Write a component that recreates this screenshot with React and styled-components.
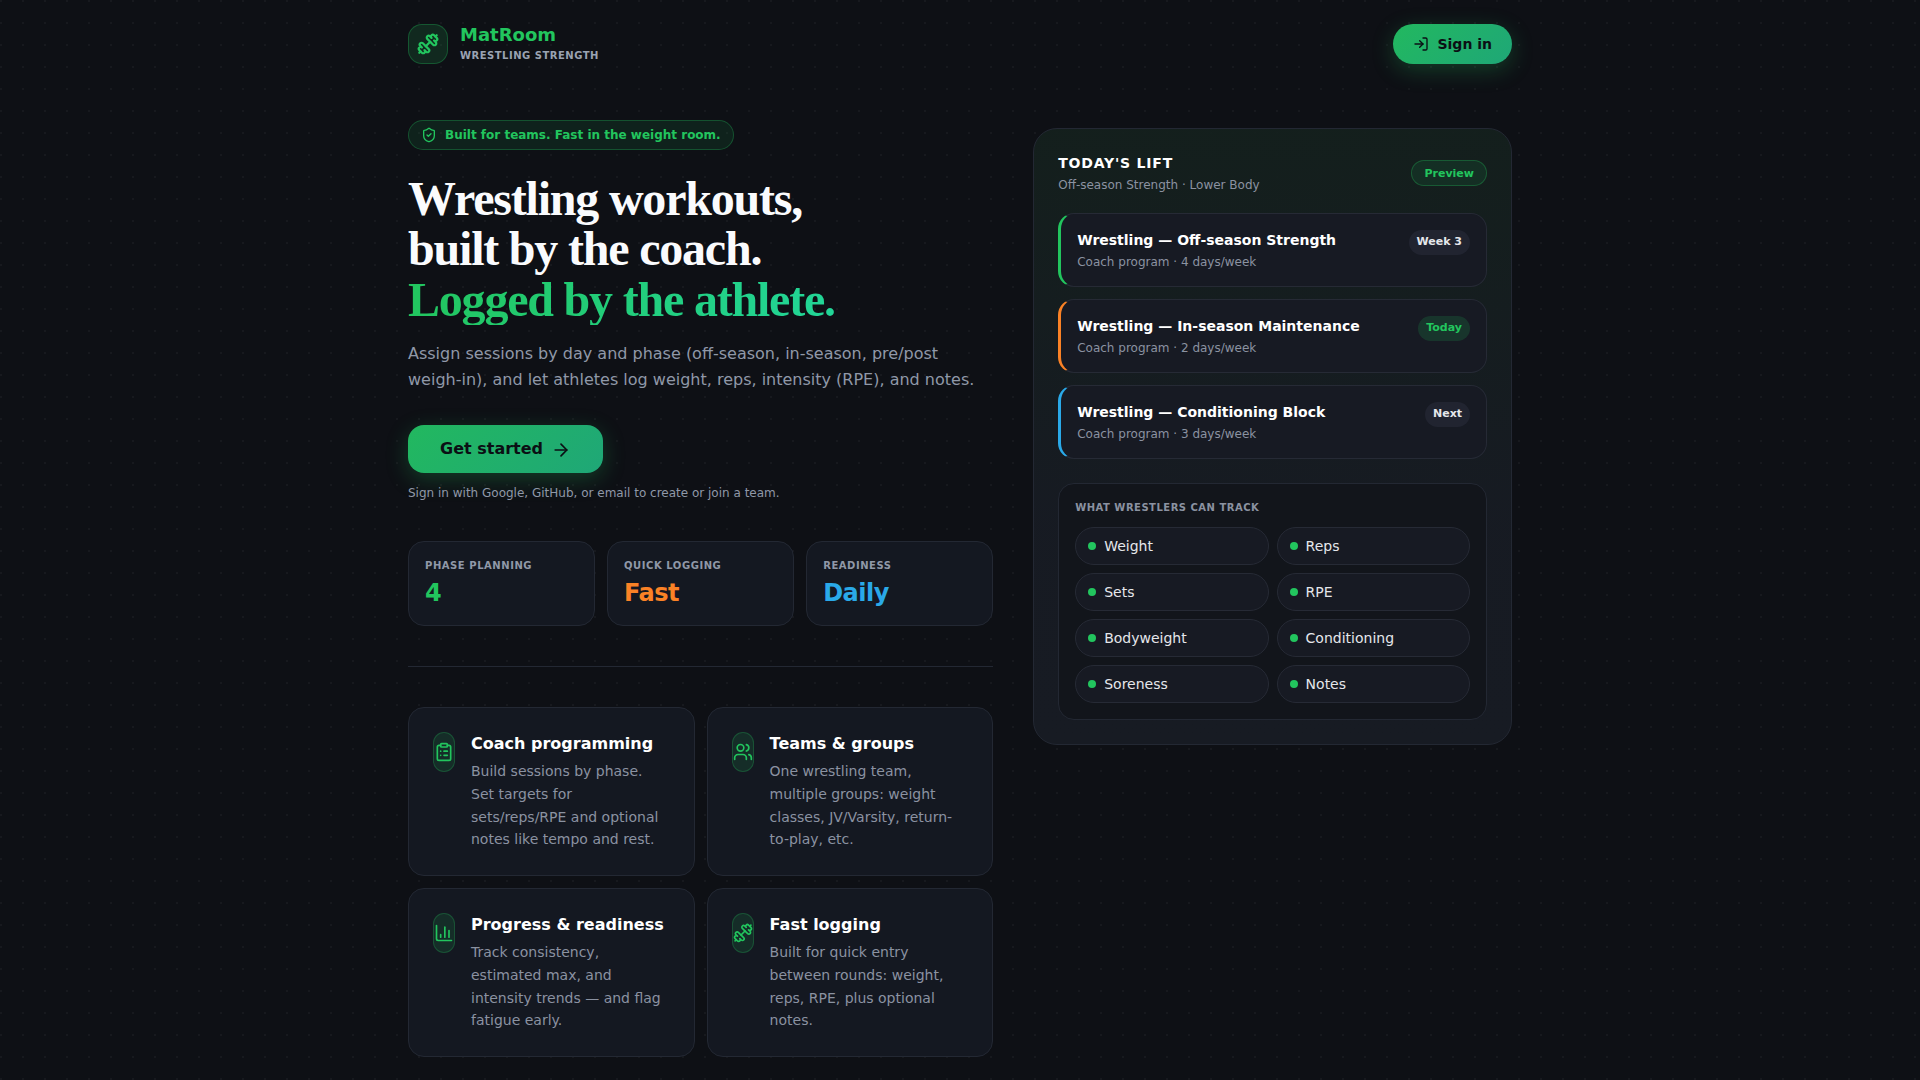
import React from 'react';
import styled, { createGlobalStyle } from 'styled-components';
import {
  ArrowRight,
  ChartColumn,
  ClipboardList,
  Dumbbell,
  LogIn,
  ShieldCheck,
  Users,
} from 'lucide-react';

const GlobalStyle = createGlobalStyle`
  * {
    box-sizing: border-box;
  }

  html, body {
    margin: 0;
    padding: 0;
    background-color: #0e1015;
  }

  body {
    min-height: 100vh;
    font-family: "DejaVu Sans", sans-serif;
    color: #e5e7eb;
    background-image: radial-gradient(circle at 1px 1px, rgba(255, 255, 255, 0.04) 1px, transparent 0);
    background-size: 22px 22px;
  }
`;

const Page = styled.div`
  width: 1152px;
  margin: 0 auto;
  padding: 0 24px 24px;
`;

const Header = styled.header`
  height: 88px;
  display: flex;
  align-items: center;
  justify-content: space-between;
`;

const Brand = styled.div`
  display: flex;
  align-items: center;
  gap: 12px;
`;

const LogoMark = styled.div`
  width: 40px;
  height: 40px;
  border-radius: 14px;
  display: flex;
  align-items: center;
  justify-content: center;
  color: #22c55e;
  background: rgba(34, 197, 94, 0.14);
  border: 1px solid rgba(34, 197, 94, 0.3);
`;

const BrandName = styled.div`
  font-size: 18px;
  line-height: 20px;
  font-weight: 700;
  color: #22c55e;
`;

const BrandTag = styled.div`
  margin-top: 4px;
  font-size: 10px;
  line-height: 14px;
  font-weight: 700;
  letter-spacing: 0.5px;
  color: #9aa3b2;
`;

const SignIn = styled.button`
  height: 40px;
  padding: 0 20px;
  border: none;
  border-radius: 20px;
  display: flex;
  align-items: center;
  gap: 8px;
  font: 700 14px "DejaVu Sans", sans-serif;
  color: #0b0f14;
  background: linear-gradient(135deg, #22b85f, #1fa777);
  box-shadow: 0 6px 22px rgba(34, 197, 94, 0.25);
`;

const Main = styled.main`
  display: grid;
  grid-template-columns: 1.1fr 0.9fr;
  gap: 40px;
  align-items: start;
  padding-top: 32px;
`;

const Column = styled.section`
  display: flex;
  flex-direction: column;
  align-items: stretch;
`;

const Pill = styled.div`
  align-self: flex-start;
  height: 30px;
  padding: 0 12px;
  border-radius: 15px;
  display: flex;
  align-items: center;
  gap: 8px;
  font-size: 12px;
  font-weight: 700;
  color: #22c55e;
  background: rgba(34, 197, 94, 0.1);
  border: 1px solid rgba(34, 197, 94, 0.3);
`;

const Headline = styled.h1`
  margin: 24px 0 0;
  font-family: "Liberation Serif", serif;
  font-size: 48px;
  line-height: 50.4px;
  font-weight: 700;
  letter-spacing: -1.2px;
  color: #fafbfd;
`;

const HeadlineAccent = styled.span`
  display: block;
  width: fit-content;
  color: transparent;
  background: linear-gradient(100deg, #22c55e, #22d698);
  -webkit-background-clip: text;
  background-clip: text;
`;

const Lead = styled.p`
  margin: 15.6px 0 0;
  font-size: 16px;
  line-height: 26px;
  color: #9098a8;
`;

const GetStarted = styled.button`
  align-self: flex-start;
  margin-top: 32px;
  height: 48px;
  padding: 0 32px;
  border: none;
  border-radius: 16px;
  display: flex;
  align-items: center;
  gap: 8px;
  font: 700 16px "DejaVu Sans", sans-serif;
  color: #0b0f14;
  background: linear-gradient(135deg, #22b85f, #1fa777);
  box-shadow: 0 6px 22px rgba(34, 197, 94, 0.25);

  svg {
    margin-top: 2px;
  }
`;

const Hint = styled.p`
  margin: 12px 0 0;
  font-size: 12px;
  line-height: 16px;
  color: #9098a8;
`;

const Stats = styled.div`
  margin-top: 40px;
  display: grid;
  grid-template-columns: repeat(3, 1fr);
  gap: 12px;
`;

const Stat = styled.div`
  height: 85px;
  padding: 17px 16px 0;
  border-radius: 16px;
  background: #141821;
  border: 1px solid #232833;
`;

const StatLabel = styled.div`
  font-size: 10px;
  line-height: 14px;
  font-weight: 700;
  letter-spacing: 0.55px;
  color: #9098a8;
`;

const StatValue = styled.div`
  margin-top: 4px;
  font-size: 24px;
  line-height: 32px;
  font-weight: 700;
  letter-spacing: -0.48px;
  color: ${(p) => p.$color};
`;

const Divider = styled.hr`
  margin: 40px 0;
  border: none;
  border-top: 1px solid #232833;
`;

const Features = styled.div`
  display: grid;
  grid-template-columns: repeat(2, 1fr);
  gap: 12px;
`;

const Feature = styled.article`
  height: 169px;
  padding: 24px;
  border-radius: 16px;
  display: flex;
  gap: 16px;
  background: #141821;
  border: 1px solid #232833;
`;

const FeatureIcon = styled.div`
  flex: 0 0 22px;
  height: 40px;
  border-radius: 14px;
  display: flex;
  align-items: center;
  justify-content: center;
  color: #22c55e;
  background: rgba(34, 197, 94, 0.12);
  border: 1px solid rgba(34, 197, 94, 0.25);

  svg {
    flex: none;
  }
`;

const FeatureTitle = styled.h3`
  margin: 0;
  font-size: 16px;
  line-height: 24px;
  font-weight: 700;
  color: #ffffff;
`;

const FeatureText = styled.p`
  margin: 4.4px 0 0;
  font-size: 14px;
  line-height: 22.75px;
  color: #8b92a1;
`;

const Panel = styled.aside`
  margin-top: 8px;
  padding: 24px;
  border-radius: 24px;
  border: 1px solid #232833;
  background: linear-gradient(180deg, rgba(20, 32, 29, 0.94), rgba(23, 27, 35, 0.96) 65%, #171b23);
`;

const PanelHead = styled.div`
  display: flex;
  align-items: center;
  justify-content: space-between;
`;

const PanelTitle = styled.div`
  font-size: 14px;
  line-height: 20px;
  font-weight: 700;
  letter-spacing: 0.8px;
  color: #ffffff;
`;

const PanelSub = styled.div`
  margin-top: 4px;
  font-size: 12px;
  line-height: 16px;
  color: #8b92a1;
`;

const PreviewTag = styled.span`
  height: 26px;
  padding: 0 12px;
  border-radius: 13px;
  display: flex;
  align-items: center;
  font-size: 11px;
  font-weight: 700;
  color: #22c55e;
  background: rgba(34, 197, 94, 0.1);
  border: 1px solid rgba(34, 197, 94, 0.3);
`;

const Programs = styled.div`
  margin-top: 20px;
  display: flex;
  flex-direction: column;
  gap: 12px;
`;

const Program = styled.div`
  height: 74px;
  padding: 16px 16px 0;
  border-radius: 16px;
  display: flex;
  align-items: flex-start;
  justify-content: space-between;
  background: #171a23;
  border: 1px solid #262a35;
  border-left: 3px solid ${(p) => p.$accent};
`;

const ProgramName = styled.div`
  font-size: 14px;
  line-height: 20px;
  font-weight: 700;
  color: #ffffff;
`;

const ProgramMeta = styled.div`
  margin-top: 4px;
  font-size: 12px;
  line-height: 16px;
  color: #8b92a1;
`;

const ProgramTag = styled.span`
  height: 25px;
  padding: 0 8px 2px;
  border-radius: 13px;
  display: flex;
  align-items: center;
  font-size: 11px;
  font-weight: 700;
  color: ${(p) => (p.$live ? '#22c55e' : '#e5e7eb')};
  background: ${(p) => (p.$live ? 'rgba(34, 197, 94, 0.16)' : '#212430')};
`;

const TrackBox = styled.div`
  margin-top: 24px;
  padding: 16px;
  border-radius: 16px;
  background: #12151b;
  border: 1px solid #232833;
`;

const TrackLabel = styled.div`
  font-size: 10px;
  line-height: 15px;
  font-weight: 700;
  letter-spacing: 0.5px;
  color: #8b92a1;
`;

const TrackGrid = styled.div`
  margin-top: 12px;
  display: grid;
  grid-template-columns: repeat(2, 1fr);
  gap: 8px;
`;

const TrackItem = styled.div`
  height: 38px;
  padding: 0 12px;
  border-radius: 19px;
  display: flex;
  align-items: center;
  gap: 8px;
  font-size: 14px;
  color: #e5e7eb;
  background: #171a23;
  border: 1px solid #262a35;
`;

const Dot = styled.span`
  width: 8px;
  height: 8px;
  border-radius: 50%;
  background: #22c55e;
`;

const features = [
  {
    icon: ClipboardList,
    title: 'Coach programming',
    text: 'Build sessions by phase. Set targets for sets/reps/RPE and optional notes like tempo and rest.',
  },
  {
    icon: Users,
    title: 'Teams & groups',
    text: 'One wrestling team, multiple groups: weight classes, JV/Varsity, return-to-play, etc.',
  },
  {
    icon: ChartColumn,
    title: 'Progress & readiness',
    text: 'Track consistency, estimated max, and intensity trends — and flag fatigue early.',
  },
  {
    icon: Dumbbell,
    title: 'Fast logging',
    text: 'Built for quick entry between rounds: weight, reps, RPE, plus optional notes.',
  },
];

const programs = [
  { name: 'Wrestling — Off-season Strength', meta: 'Coach program · 4 days/week', tag: 'Week 3', accent: '#22c55e' },
  { name: 'Wrestling — In-season Maintenance', meta: 'Coach program · 2 days/week', tag: 'Today', accent: '#fb8226', live: true },
  { name: 'Wrestling — Conditioning Block', meta: 'Coach program · 3 days/week', tag: 'Next', accent: '#2aa9e8' },
];

const tracked = ['Weight', 'Reps', 'Sets', 'RPE', 'Bodyweight', 'Conditioning', 'Soreness', 'Notes'];

export default function App() {
  return (
    <>
      <GlobalStyle />
      <Page>
        <Header>
          <Brand>
            <LogoMark>
              <Dumbbell size={22} strokeWidth={2.4} />
            </LogoMark>
            <div>
              <BrandName>MatRoom</BrandName>
              <BrandTag>WRESTLING STRENGTH</BrandTag>
            </div>
          </Brand>
          <SignIn>
            <LogIn size={16} />
            Sign in
          </SignIn>
        </Header>

        <Main>
          <Column>
            <Pill>
              <ShieldCheck size={16} />
              Built for teams. Fast in the weight room.
            </Pill>
            <Headline>
              Wrestling workouts,
              <br />
              built by the coach.
              <HeadlineAccent>Logged by the athlete.</HeadlineAccent>
            </Headline>
            <Lead>
              Assign sessions by day and phase (off-season, in-season, pre/post weigh-in), and let athletes log
              weight, reps, intensity (RPE), and notes.
            </Lead>
            <GetStarted>
              Get started
              <ArrowRight size={20} />
            </GetStarted>
            <Hint>Sign in with Google, GitHub, or email to create or join a team.</Hint>

            <Stats>
              <Stat>
                <StatLabel>PHASE PLANNING</StatLabel>
                <StatValue $color="#22c55e">4</StatValue>
              </Stat>
              <Stat>
                <StatLabel>QUICK LOGGING</StatLabel>
                <StatValue $color="#fb8226">Fast</StatValue>
              </Stat>
              <Stat>
                <StatLabel>READINESS</StatLabel>
                <StatValue $color="#2aa9e8">Daily</StatValue>
              </Stat>
            </Stats>

            <Divider />

            <Features>
              {features.map(({ icon: Icon, title, text }) => (
                <Feature key={title}>
                  <FeatureIcon>
                    <Icon size={20} />
                  </FeatureIcon>
                  <div>
                    <FeatureTitle>{title}</FeatureTitle>
                    <FeatureText>{text}</FeatureText>
                  </div>
                </Feature>
              ))}
            </Features>
          </Column>

          <Panel>
            <PanelHead>
              <div>
                <PanelTitle>TODAY'S LIFT</PanelTitle>
                <PanelSub>Off-season Strength · Lower Body</PanelSub>
              </div>
              <PreviewTag>Preview</PreviewTag>
            </PanelHead>

            <Programs>
              {programs.map((program) => (
                <Program key={program.name} $accent={program.accent}>
                  <div>
                    <ProgramName>{program.name}</ProgramName>
                    <ProgramMeta>{program.meta}</ProgramMeta>
                  </div>
                  <ProgramTag $live={program.live}>{program.tag}</ProgramTag>
                </Program>
              ))}
            </Programs>

            <TrackBox>
              <TrackLabel>WHAT WRESTLERS CAN TRACK</TrackLabel>
              <TrackGrid>
                {tracked.map((item) => (
                  <TrackItem key={item}>
                    <Dot />
                    {item}
                  </TrackItem>
                ))}
              </TrackGrid>
            </TrackBox>
          </Panel>
        </Main>
      </Page>
    </>
  );
}
